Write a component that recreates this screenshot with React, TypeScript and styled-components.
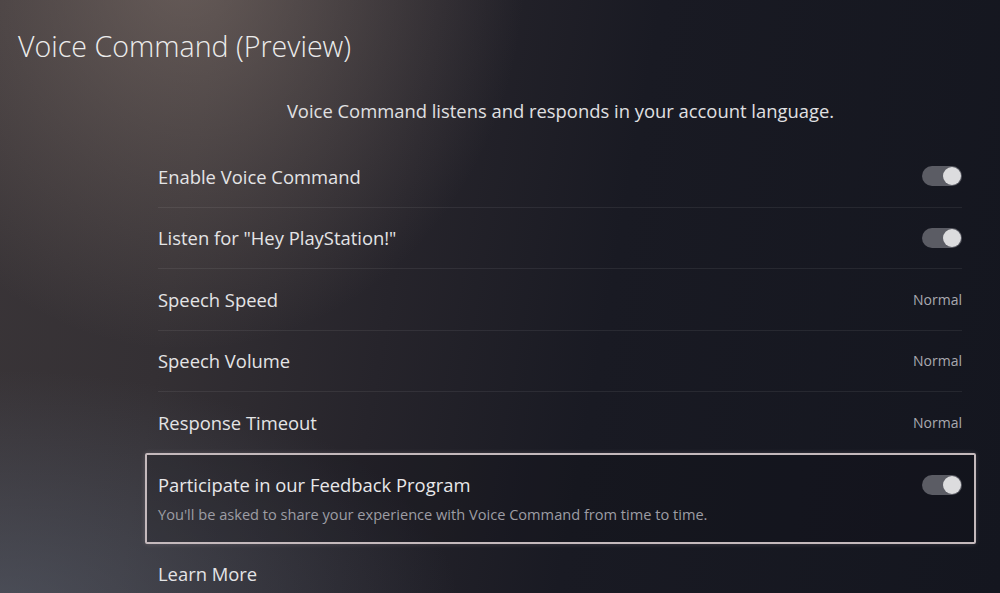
import styled, { createGlobalStyle } from 'styled-components';

const GlobalStyle = createGlobalStyle`
    html, body {
        margin: 0;
        padding: 0;
        background: #15161f;
    }
    * {
        box-sizing: border-box;
    }
`;

const StyledPage = styled.div`
    width: 1000px;
    height: 593px;
    overflow: hidden;
    font-family: 'Open Sans', 'Noto Sans', sans-serif;
    color: #e4e4e6;
    background:
        radial-gradient(ellipse 340px 380px at 185px -30px, rgba(150, 132, 122, 0.5), rgba(150, 132, 122, 0) 100%),
        radial-gradient(ellipse 460px 240px at 0px 610px, rgba(95, 105, 122, 0.5), rgba(95, 105, 122, 0) 100%),
        linear-gradient(100deg, #3a3538 0%, #343034 20%, #26242b 40%, #191a23 60%, #14161f 100%);
`;

const Title = styled.h1`
    margin: 0;
    padding: 28px 18px 0;
    font-weight: 300;
    font-size: 28.6px;
    line-height: 36px;
    color: #ececec;
`;

const Content = styled.div`
    width: 831px;
    margin-left: 145px;
    display: flex;
    flex-direction: column;
`;

const Description = styled.p`
    margin: 35px 0 23px;
    text-align: center;
    font-size: 18.4px;
    line-height: 24px;
    color: #e0e0e2;
`;

const Row = styled.div<{ $last?: boolean }>`
    height: 61.5px;
    padding: 0 14px 0 13px;
    display: flex;

    & > div {
        flex: 1;
        display: flex;
        align-items: center;
        justify-content: space-between;
        border-bottom: ${(p) => (p.$last ? 'none' : '1px solid rgba(255, 255, 255, 0.07)')};
    }
`;

const Label = styled.span`
    font-size: 18.4px;
    color: #e4e4e6;
`;

const Value = styled.span`
    font-size: 14px;
    color: #a9a9b0;
`;

const Toggle = styled.span`
    width: 40px;
    height: 20px;
    border-radius: 10px;
    background: #5b5c64;
    display: flex;
    align-items: center;
    justify-content: flex-end;
    padding: 0 1px;

    &::after {
        content: '';
        width: 18px;
        height: 18px;
        border-radius: 50%;
        background: #dcdcde;
    }
`;

const FocusBox = styled.div`
    margin-top: -1px;
    height: 91px;
    border: 2px solid #c4b9bc;
    border-radius: 2px;
    background: rgba(10, 10, 16, 0.18);
    box-shadow: 0 0 5px rgba(220, 210, 215, 0.2);
    padding: 16px 12px 0 11px;
    display: flex;
    justify-content: space-between;
    align-items: flex-start;
`;

const FocusText = styled.div`
    display: flex;
    flex-direction: column;

    & p {
        margin: 0;
    }

    & p:first-child {
        font-size: 18.4px;
        line-height: 28px;
        color: #e8e8ea;
    }

    & p:last-child {
        font-size: 14.6px;
        line-height: 20px;
        margin-top: 5px;
        color: #9d9da4;
    }
`;

const FocusToggle = styled(Toggle)`
    margin-top: 4px;
`;

const LinkRow = styled.div`
    height: 60px;
    padding-left: 13px;
    display: flex;
    align-items: center;
    font-size: 18.4px;
    color: #e4e4e6;
`;

interface ISetting {
    label: string;
    value?: string;
}

const settings: ISetting[] = [
    { label: 'Enable Voice Command' },
    { label: 'Listen for "Hey PlayStation!"' },
    { label: 'Speech Speed', value: 'Normal' },
    { label: 'Speech Volume', value: 'Normal' },
    { label: 'Response Timeout', value: 'Normal' },
];

const App = () => {
    return (
        <>
            <GlobalStyle />
            <StyledPage>
                <Title>Voice Command (Preview)</Title>
                <Content>
                    <Description>Voice Command listens and responds in your account language.</Description>

                    {settings.map((s, i) => (
                        <Row key={s.label} $last={i === settings.length - 1}>
                            <div>
                                <Label>{s.label}</Label>
                                {s.value ? <Value>{s.value}</Value> : <Toggle />}
                            </div>
                        </Row>
                    ))}

                    <FocusBox>
                        <FocusText>
                            <p>Participate in our Feedback Program</p>
                            <p>You'll be asked to share your experience with Voice Command from time to time.</p>
                        </FocusText>
                        <FocusToggle />
                    </FocusBox>

                    <LinkRow>Learn More</LinkRow>
                </Content>
            </StyledPage>
        </>
    );
};

export default App;
